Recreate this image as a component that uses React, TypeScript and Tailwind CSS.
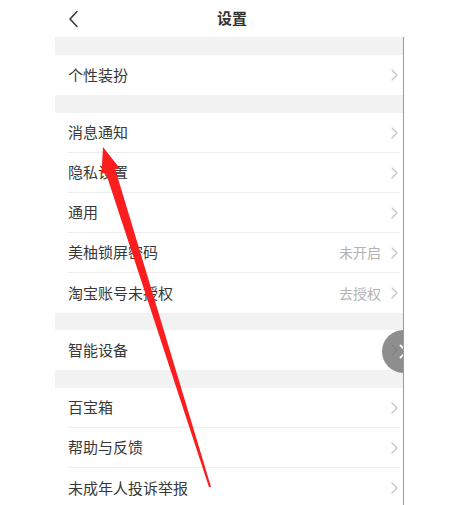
const groups: { label: string; value?: string }[][] = [
  [{ label: "个性装扮" }],
  [
    { label: "消息通知" },
    { label: "隐私设置" },
    { label: "通用" },
    { label: "美柚锁屏密码", value: "未开启" },
    { label: "淘宝账号未授权", value: "去授权" },
  ],
  [{ label: "智能设备" }],
  [{ label: "百宝箱" }, { label: "帮助与反馈" }, { label: "未成年人投诉举报" }],
];

const gaps = ["h-[18px]", "h-[18px]", "h-[17px]", "h-[18px]"];

function Chevron() {
  return (
    <svg width="7" height="12" viewBox="0 0 7 12" fill="none" aria-hidden>
      <path d="M1 1l5 5-5 5" stroke="#c4c4c4" strokeWidth="1.2" strokeLinecap="round" strokeLinejoin="round" />
    </svg>
  );
}

function Row({ label, value, last }: { label: string; value?: string; last: boolean }) {
  return (
    <div className="flex h-[40px] items-stretch pl-[13px] pr-[3px] bg-white">
      <div className={`flex flex-1 items-center pr-[2px] ${last ? "" : "border-b border-[#ededed]"}`}>
        <span className="flex-1 text-[15px] text-[#383838]">{label}</span>
        {value && <span className="mr-[10px] text-[14px] text-[#b3b3b3]">{value}</span>}
        <Chevron />
      </div>
    </div>
  );
}

export default function App() {
  return (
    <div
      className="relative h-[505px] w-[465px] overflow-hidden bg-white"
      style={{ fontFamily: '"Noto Sans CJK SC", "Noto Sans", sans-serif' }}
    >
      <div className="ml-[55px] w-[349px]">
        <header className="relative flex h-[37px] w-[348px] items-center justify-center">
          <svg className="absolute left-[13px] top-[10px]" width="11" height="18" viewBox="0 0 11 18" fill="none" aria-hidden>
            <path d="M9 1.5L2 9l7 7.5" stroke="#333333" strokeWidth="1.5" strokeLinecap="round" strokeLinejoin="round" />
          </svg>
          <span className="ml-[6px] text-[15px] font-bold text-[#333333]">设置</span>
        </header>
        <div className="relative overflow-hidden border-r border-[#9a9a9a] bg-[#f2f2f2] pb-[40px]">
          {groups.map((rows, gi) => (
            <div key={gi}>
              <div className={gaps[gi]} />
              {rows.map((r, ri) => (
                <Row key={r.label} label={r.label} value={r.value} last={ri === rows.length - 1} />
              ))}
            </div>
          ))}
          <div className="absolute right-[-22px] top-[293px] flex h-[43px] w-[43px] items-center justify-center rounded-full bg-[rgba(110,110,110,0.78)]">
            <svg width="9" height="15" viewBox="0 0 9 15" fill="none" aria-hidden>
              <path d="M1.5 1.5l6 6-6 6" stroke="#ffffff" strokeWidth="1.8" strokeLinecap="round" strokeLinejoin="round" />
            </svg>
          </div>
        </div>
      </div>
      <svg className="pointer-events-none absolute left-0 top-0" width="465" height="505" viewBox="0 0 465 505" aria-hidden>
        <polygon
          points="103,147 119.5,168 115.3,169.4 211,486.7 209,487.3 105.7,172.4 101.5,173.8"
          fill="#fa1e1e"
        />
      </svg>
    </div>
  );
}
